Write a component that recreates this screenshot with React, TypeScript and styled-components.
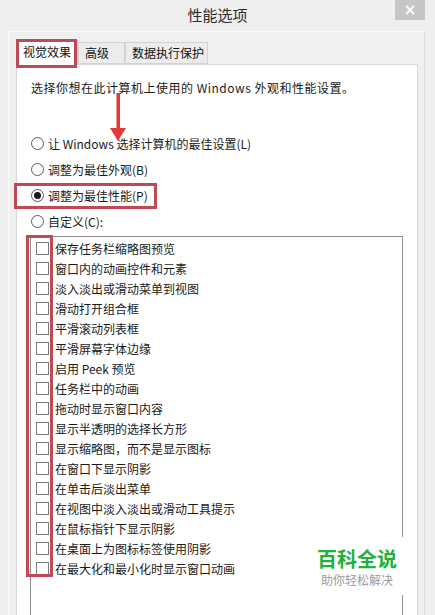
import styled, { createGlobalStyle } from "styled-components";

const GlobalStyle = createGlobalStyle`
  html, body {
    margin: 0;
    padding: 0;
    background: #f0f0f0;
  }
  body {
    font-family: "Noto Sans CJK SC", "Noto Sans", sans-serif;
    color: #1a1a1a;
  }
`;

const visualItems = [
  "保存任务栏缩略图预览",
  "窗口内的动画控件和元素",
  "淡入淡出或滑动菜单到视图",
  "滑动打开组合框",
  "平滑滚动列表框",
  "平滑屏幕字体边缘",
  "启用 Peek 预览",
  "任务栏中的动画",
  "拖动时显示窗口内容",
  "显示半透明的选择长方形",
  "显示缩略图，而不是显示图标",
  "在窗口下显示阴影",
  "在单击后淡出菜单",
  "在视图中淡入淡出或滑动工具提示",
  "在鼠标指针下显示阴影",
  "在桌面上为图标标签使用阴影",
  "在最大化和最小化时显示窗口动画",
];

const radios = [
  { label: "让 Windows 选择计算机的最佳设置(L)", checked: false, mark: false },
  { label: "调整为最佳外观(B)", checked: false, mark: false },
  { label: "调整为最佳性能(P)", checked: true, mark: true },
  { label: "自定义(C):", checked: false, mark: false },
];

function App() {
  return (
    <>
      <GlobalStyle />
      <Window>
        <TitleBar>
          <span />
          <Title>性能选项</Title>
          <CloseButton>×</CloseButton>
        </TitleBar>
        <Frame>
          <Tabs>
            <Tab $active $mark $width={62}>
              视觉效果
            </Tab>
            <Tab $width={47}>高级</Tab>
            <Tab $width={83}>数据执行保护</Tab>
          </Tabs>
          <Panel>
            <Arrow width="18" height="48" viewBox="0 0 18 48">
              <rect x="7.5" y="0" width="3.5" height="37" fill="#e23a3a" />
              <path d="M1 35 L17 35 L9 48 Z" fill="#e23a3a" />
            </Arrow>
            <Intro>选择你想在此计算机上使用的 Windows 外观和性能设置。</Intro>
            <RadioGroup>
              {radios.map((r) => (
                <RadioRow key={r.label} $mark={r.mark}>
                  <RadioDot $checked={r.checked} />
                  <span>{r.label}</span>
                </RadioRow>
              ))}
            </RadioGroup>
            <ListBox>
              <CheckMark />
              {visualItems.map((item) => (
                <CheckRow key={item}>
                  <CheckBox />
                  <span>{item}</span>
                </CheckRow>
              ))}
            </ListBox>
            <Watermark>
              <Brand>百科全说</Brand>
              <Slogan>助你轻松解决</Slogan>
            </Watermark>
          </Panel>
        </Frame>
      </Window>
    </>
  );
}

const Window = styled.div`
  width: 435px;
  height: 615px;
  overflow: hidden;
  background: #efefef;
  display: flex;
  flex-direction: column;
`;

const TitleBar = styled.div`
  height: 31px;
  display: grid;
  grid-template-columns: 1fr auto 1fr;
  align-items: start;
`;

const Title = styled.div`
  font-size: 15px;
  line-height: 30px;
  color: #2b2b2b;
`;

const CloseButton = styled.div`
  justify-self: end;
  margin-right: 10px;
  width: 30px;
  height: 20px;
  background: #c6c6c6;
  color: #ffffff;
  font-family: "DejaVu Sans", sans-serif;
  font-size: 15px;
  font-weight: bold;
  line-height: 20px;
  text-align: center;
`;

const Frame = styled.div`
  flex: 1;
  margin: 0 10px 0 8px;
  border: 1px solid #fbfbfb;
  border-right-color: #dcdcdc;
  border-bottom: none;
  padding: 8px 6px 0 7px;
  display: flex;
  flex-direction: column;
  background: #f0f0f0;
`;

const Tabs = styled.div`
  display: flex;
  align-items: flex-end;
  height: 24px;
  position: relative;
  z-index: 2;
`;

const Tab = styled.div<{ $active?: boolean; $mark?: boolean; $width: number }>`
  position: relative;
  box-sizing: border-box;
  width: ${(p) => p.$width}px;
  height: ${(p) => (p.$active ? 25 : 22)}px;
  margin-bottom: ${(p) => (p.$active ? -1 : 0)}px;
  padding: 0 6px;
  border: 1px solid #d2d2d2;
  border-bottom: ${(p) => (p.$active ? "none" : "1px solid #d2d2d2")};
  background: ${(p) => (p.$active ? "#ffffff" : "#ececec")};
  font-size: 12px;
  line-height: ${(p) => (p.$active ? 22 : 20)}px;
  color: #111;
  white-space: nowrap;
  &::after {
    content: "";
    display: ${(p) => (p.$mark ? "block" : "none")};
    position: absolute;
    left: -1px;
    top: -2px;
    right: 0;
    bottom: -3px;
    border: 3px solid #bd4a55;
  }
`;

const Panel = styled.div`
  position: relative;
  flex: 1;
  background: #ffffff;
  border: 1px solid #d9d9d9;
  border-bottom: none;
  padding: 15px 14px 0 14px;
  display: flex;
  flex-direction: column;
`;

const Arrow = styled.svg`
  position: absolute;
  left: 92px;
  top: 28px;
  z-index: 1;
`;

const Intro = styled.div`
  font-size: 12px;
  line-height: 16px;
  letter-spacing: 0.5px;
  white-space: nowrap;
`;

const RadioGroup = styled.div`
  margin-top: 34px;
  display: flex;
  flex-direction: column;
`;

const RadioRow = styled.div<{ $mark: boolean }>`
  position: relative;
  align-self: flex-start;
  height: 26px;
  display: flex;
  align-items: center;
  gap: 4px;
  font-size: 12px;
  white-space: nowrap;
  &::before {
    content: "";
    display: ${(p) => (p.$mark ? "block" : "none")};
    position: absolute;
    left: -17px;
    right: -9px;
    top: 1px;
    bottom: -1px;
    border: 3px solid #bd4a55;
  }
`;

const RadioDot = styled.span<{ $checked: boolean }>`
  box-sizing: border-box;
  width: 13px;
  height: 13px;
  border-radius: 50%;
  border: 1px solid #5a5a5a;
  background: #ffffff;
  display: flex;
  align-items: center;
  justify-content: center;
  &::after {
    content: "";
    display: ${(p) => (p.$checked ? "block" : "none")};
    width: 7px;
    height: 7px;
    border-radius: 50%;
    background: #1a1a1a;
  }
`;

const ListBox = styled.div`
  position: relative;
  margin: 2px 0 0 -1px;
  flex: 1;
  border: 1px solid #8f8f8f;
  border-bottom: none;
  padding: 1px 0 0 5px;
  display: flex;
  flex-direction: column;
`;

const CheckMark = styled.div`
  position: absolute;
  left: -5px;
  top: -2px;
  width: 21px;
  height: 336px;
  border: 3px solid #bd4a55;
`;

const CheckRow = styled.div`
  height: 20px;
  display: flex;
  align-items: center;
  gap: 6px;
  font-size: 12px;
  white-space: nowrap;
`;

const CheckBox = styled.span`
  box-sizing: border-box;
  width: 13px;
  height: 13px;
  border: 1px solid #7a7a7a;
  background: #ffffff;
`;

const Watermark = styled.div`
  position: absolute;
  right: 6px;
  top: 472px;
  width: 108px;
  height: 58px;
  background: #ffffff;
  display: flex;
  flex-direction: column;
  align-items: center;
  justify-content: center;
`;

const Brand = styled.div`
  font-size: 20px;
  font-weight: bold;
  line-height: 26px;
  color: #1fb13a;
`;

const Slogan = styled.div`
  font-size: 12px;
  line-height: 15px;
  color: #9a9a9a;
`;

export default App;
